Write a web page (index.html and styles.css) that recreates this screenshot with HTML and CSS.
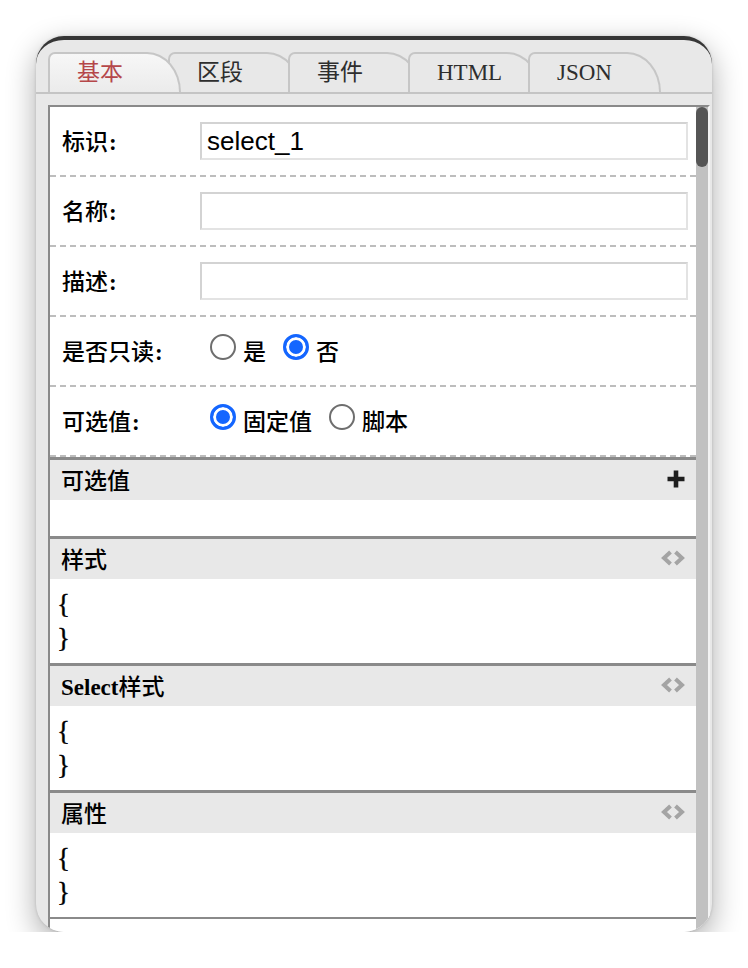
FILE: index.html
```html
<!DOCTYPE html>
<html lang="zh">
<head>
<meta charset="utf-8">
<title>属性编辑</title>
<link rel="stylesheet" href="styles.css">
</head>
<body>
<div class="window">
  <div class="tabs">
    <div class="tab active">基本</div>
    <div class="tab">区段</div>
    <div class="tab">事件</div>
    <div class="tab">HTML</div>
    <div class="tab">JSON</div>
  </div>
  <div class="panel">
    <div class="content">
      <div class="row">
        <span class="label">标识<b class="colon">:</b></span>
        <input class="field" type="text" value="select_1">
      </div>
      <div class="row">
        <span class="label">名称<b class="colon">:</b></span>
        <input class="field" type="text" value="">
      </div>
      <div class="row">
        <span class="label">描述<b class="colon">:</b></span>
        <input class="field" type="text" value="">
      </div>
      <div class="row">
        <span class="label">是否只读<b class="colon">:</b></span>
        <div class="opts">
          <label class="opt"><input class="radio" type="radio" name="ro">是</label>
          <label class="opt"><input class="radio" type="radio" name="ro" checked>否</label>
        </div>
      </div>
      <div class="row">
        <span class="label">可选值<b class="colon">:</b></span>
        <div class="opts">
          <label class="opt"><input class="radio" type="radio" name="src" checked>固定值</label>
          <label class="opt"><input class="radio" type="radio" name="src">脚本</label>
        </div>
      </div>

      <div class="section">
        <div class="sec-head">
          <span>可选值</span>
          <svg class="icon-plus" width="20" height="20" viewBox="0 0 20 20"><path d="M10 1.5V18.5M1.5 10H18.5" stroke="#1e1e1e" stroke-width="4.6" fill="none"/></svg>
        </div>
        <div class="sec-body empty"></div>
      </div>

      <div class="section">
        <div class="sec-head">
          <span>样式</span>
          <svg class="icon-code" width="26" height="16" viewBox="0 0 26 16"><path d="M10.5 2L4 8L10.5 14M15.5 2L22 8L15.5 14" stroke="#a4a4a4" stroke-width="4" fill="none"/></svg>
        </div>
        <div class="sec-body code">{<br>}</div>
      </div>

      <div class="section">
        <div class="sec-head">
          <span><b class="latin">Select</b>样式</span>
          <svg class="icon-code" width="26" height="16" viewBox="0 0 26 16"><path d="M10.5 2L4 8L10.5 14M15.5 2L22 8L15.5 14" stroke="#a4a4a4" stroke-width="4" fill="none"/></svg>
        </div>
        <div class="sec-body code">{<br>}</div>
      </div>

      <div class="section last">
        <div class="sec-head">
          <span>属性</span>
          <svg class="icon-code" width="26" height="16" viewBox="0 0 26 16"><path d="M10.5 2L4 8L10.5 14M15.5 2L22 8L15.5 14" stroke="#a4a4a4" stroke-width="4" fill="none"/></svg>
        </div>
        <div class="sec-body code">{<br>}</div>
      </div>
    </div>
    <div class="scrollbar"><div class="thumb"></div></div>
  </div>
</div>
</body>
</html>
```

FILE: styles.css
```css
* { box-sizing: border-box; }

html, body {
  margin: 0;
  background: #ffffff;
}

body {
  font-family: "Liberation Serif", "Noto Sans CJK SC", serif;
  color: #111;
}

.window {
  margin: 36px 0 0 36px;
  width: 676px;
  height: 896px;
  border-radius: 28px;
  border-top: 4px solid #363636;
  background: #e8e8e8;
  overflow: hidden;
  box-shadow: 0 10px 30px rgba(0, 0, 0, 0.33), 0 0 3px rgba(0, 0, 0, 0.15);
  display: flex;
  flex-direction: column;
}

/* tabs */
.tabs {
  display: flex;
  padding: 12px 0 0 12px;
  border-bottom: 2px solid #c4c4c4;
}

.tab {
  flex: none;
  width: 133px;
  height: 40px;
  margin-right: -13px;
  border: 2px solid #c6c6c6;
  border-bottom: none;
  border-radius: 7px 34px 0 0 / 7px 40px 0 0;
  background: #e8e8e8;
  padding-left: 27px;
  font-size: 23px;
  line-height: 38px;
  color: #2e2e2e;
  z-index: 1;
}

.tab.active {
  z-index: 2;
  color: #b5474a;
  background: linear-gradient(#f7f7f7, #ebebeb);
}

/* panel */
.panel {
  flex: 1;
  min-height: 0;
  margin: 11px 0 0 12px;
  width: 662px;
  display: flex;
  background: #fff;
  border-top: 2px solid #8a8a8a;
  border-left: 2px solid #8a8a8a;
  border-right: 2px solid #f3f3f3;
  overflow: hidden;
}

.content {
  flex: 1;
  min-width: 0;
}

.scrollbar {
  flex: none;
  width: 12px;
  background: #c1c1c1;
}

.thumb {
  height: 60px;
  background: #555;
  border-radius: 6px;
}

/* form rows */
.row {
  display: flex;
  align-items: center;
  height: 70px;
  border-bottom: 2px dashed #bdbdbd;
}

.label {
  flex: none;
  width: 150px;
  padding: 0 0 3px 12px;
  font-size: 23px;
  font-weight: 500;
  color: #000;
}

.colon {
  font-weight: bold;
  margin-left: 1px;
}

.field {
  width: 488px;
  height: 38px;
  margin: 0;
  padding: 0 5px;
  border: 2px solid;
  border-color: #d3d3d3 #e3e3e3 #e3e3e3 #d3d3d3;
  background: #fff;
  font-family: "Liberation Sans", Arial, sans-serif;
  font-size: 26px;
  color: #000;
  outline: none;
}

.opts {
  display: flex;
  align-items: center;
  gap: 17px;
  padding: 0 0 3px 10px;
}

.opt {
  display: flex;
  align-items: center;
  gap: 7px;
  font-size: 23px;
  font-weight: 500;
  color: #000;
}

.radio {
  -webkit-appearance: none;
  appearance: none;
  margin: 0 0 5px 0;
  width: 26px;
  height: 26px;
  border-radius: 50%;
  border: 2px solid #6e6e6e;
  background: #fff;
}

.radio:checked {
  border: 3px solid #1466ff;
  background: #1466ff;
  box-shadow: inset 0 0 0 3px #fff;
}

/* sections */
.section {
  border-top: 3px solid #8a8a8a;
}

.section.last {
  border-bottom: 2px solid #8a8a8a;
}

.sec-head {
  height: 40px;
  background: #e8e8e8;
  display: flex;
  align-items: center;
  justify-content: space-between;
  padding: 0 10px 2px 11px;
  font-size: 23px;
  font-weight: 500;
  color: #000;
}

.latin {
  font-weight: bold;
}

.sec-head svg {
  display: block;
}

.sec-body {
  background: #fff;
}

.sec-body.empty {
  height: 36px;
}

.sec-body.code {
  height: 84px;
  padding: 8px 0 0 7px;
  font-size: 27px;
  line-height: 34px;
  color: #000;
  -webkit-text-stroke: 0.4px #000;
}
```
